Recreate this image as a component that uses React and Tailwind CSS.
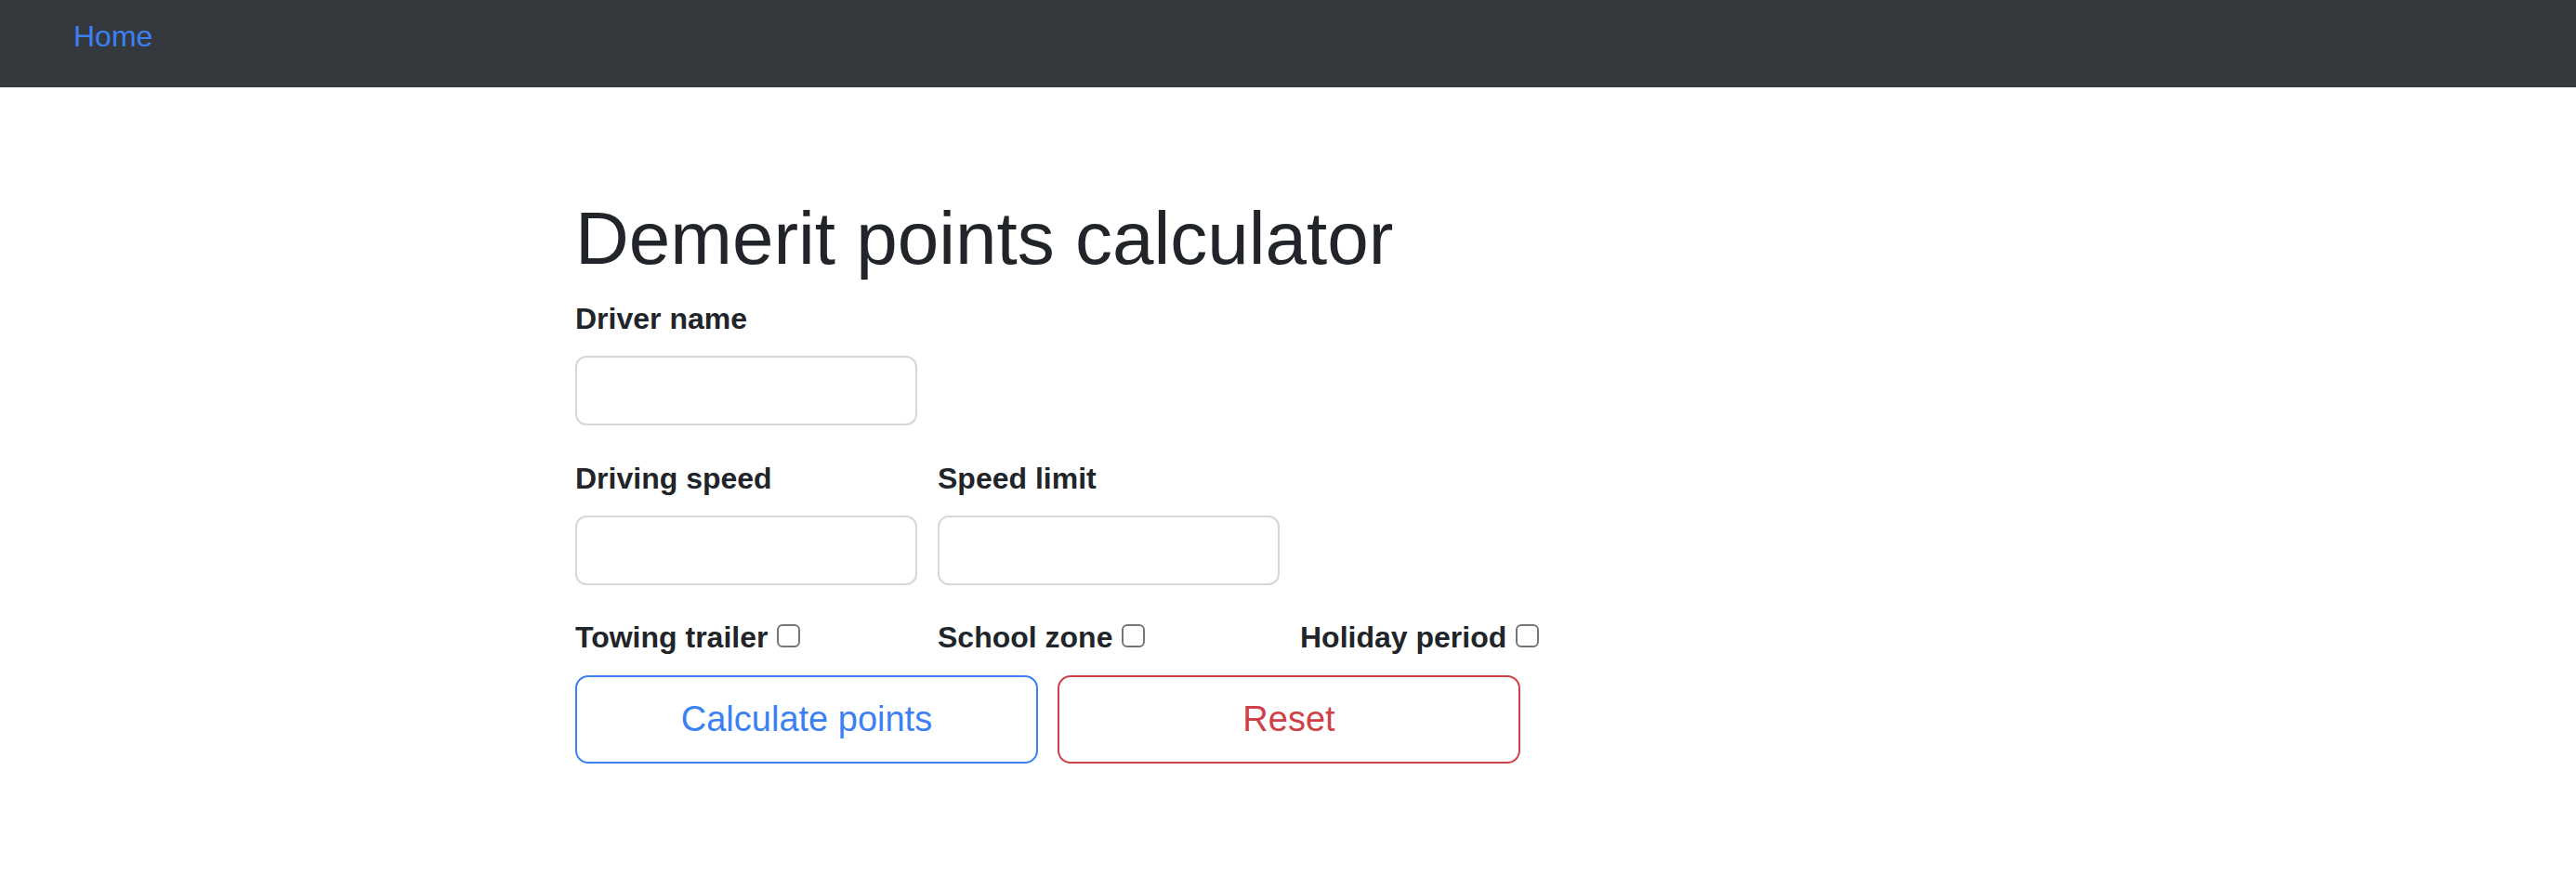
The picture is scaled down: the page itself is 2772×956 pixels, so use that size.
import { useState } from 'react';

const Field = ({ label, value, onChange }) => (
    <div className="w-[390px] flex flex-col">
        <label className="text-[32px] leading-[48px] font-bold text-[#212529] mb-[16px]">{label}</label>
        <input
            type="text"
            value={value}
            onChange={(e) => onChange(e.target.value)}
            className="w-[368px] h-[75px] border-2 border-[#d4d8dd] rounded-[12px] px-[24px] text-[32px] outline-none"
        />
    </div>
);

const Check = ({ label, checked, onChange }) => (
    <div className="w-[390px] flex items-center">
        <span className="text-[32px] leading-[48px] font-bold text-[#212529]">{label}</span>
        <input
            type="checkbox"
            checked={checked}
            onChange={(e) => onChange(e.target.checked)}
            className="appearance-none w-[25px] h-[25px] ml-[10px] mb-[4px] border-2 border-[#767676] rounded-[6px] bg-white"
        />
    </div>
);

const App = () => {
    const [name, setName] = useState('');
    const [speed, setSpeed] = useState('');
    const [limit, setLimit] = useState('');
    const [towing, setTowing] = useState(false);
    const [school, setSchool] = useState(false);
    const [holiday, setHoliday] = useState(false);

    const reset = () => {
        setName('');
        setSpeed('');
        setLimit('');
        setTowing(false);
        setSchool(false);
        setHoliday(false);
    };

    return (
        <div className="min-h-[956px] bg-white font-['Liberation_Sans',Arial,sans-serif]">
            <nav className="h-[94px] bg-[#35393e] pl-[79px] pt-[15px]">
                <a href="#" className="text-[32px] leading-[48px] text-[#3b80f5]">Home</a>
            </nav>

            <main className="pl-[619px] pt-[115px]">
                <h1 className="text-[80px] leading-[96px] font-normal text-[#212529] mb-[14px]">Demerit points calculator</h1>

                <div className="flex mb-[33px]">
                    <Field label="Driver name" value={name} onChange={setName} />
                </div>

                <div className="flex mb-[32px]">
                    <Field label="Driving speed" value={speed} onChange={setSpeed} />
                    <Field label="Speed limit" value={limit} onChange={setLimit} />
                </div>

                <div className="flex mb-[17px]">
                    <Check label="Towing trailer" checked={towing} onChange={setTowing} />
                    <Check label="School zone" checked={school} onChange={setSchool} />
                    <Check label="Holiday period" checked={holiday} onChange={setHoliday} />
                </div>

                <div className="flex gap-[21px]">
                    <button className="w-[498px] h-[95px] border-2 border-[#3b80f5] rounded-[14px] text-[38px] text-[#3b80f5] flex items-center justify-center">
                        Calculate points
                    </button>
                    <button
                        onClick={reset}
                        className="w-[498px] h-[95px] border-2 border-[#cf4148] rounded-[14px] text-[38px] text-[#cf4148] flex items-center justify-center"
                    >
                        Reset
                    </button>
                </div>
            </main>
        </div>
    );
};

export default App;
